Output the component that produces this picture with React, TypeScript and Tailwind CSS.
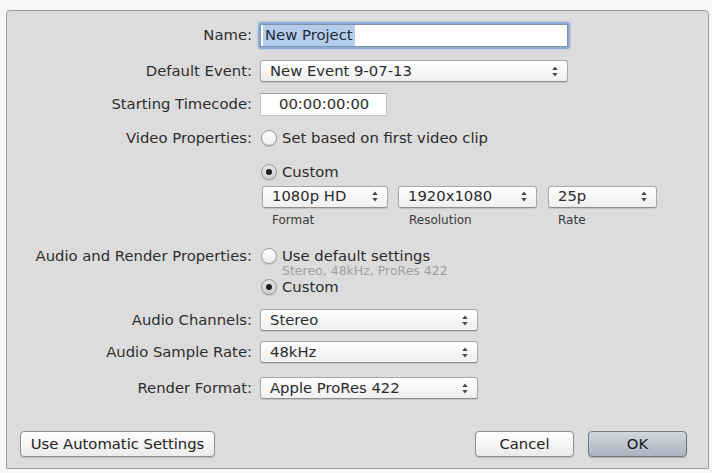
import React from "react";

const font = { fontFamily: '"DejaVu Sans", "Liberation Sans", sans-serif' };

function Arrows() {
  return (
    <svg width="6" height="11" viewBox="0 0 6 11" className="shrink-0">
      <path d="M3 0.5 L5.6 4 L0.4 4 Z" fill="#444" />
      <path d="M3 10.5 L5.6 7 L0.4 7 Z" fill="#444" />
    </svg>
  );
}

function Popup({ text, w, className = "" }: { text: string; w: string; className?: string }) {
  return (
    <div
      className={`${w} ${className} h-[22px] flex items-center justify-between pl-[9px] pr-[9px] rounded-[3px] border border-[#a8a8a8] border-b-[#8e8e8e] bg-gradient-to-b from-[#ffffff] to-[#efefef] shadow-[0_1px_1px_rgba(0,0,0,0.12)] text-[14.8px] text-[#2b2b2b]`}
    >
      <span className="leading-none">{text}</span>
      <Arrows />
    </div>
  );
}

function Radio({ on }: { on?: boolean }) {
  return (
    <div
      className={`w-[16px] h-[16px] rounded-full border border-[#9a9a9a] flex items-center justify-center shrink-0 shadow-[0_1px_1px_rgba(0,0,0,0.12)] ${
        on ? "bg-gradient-to-b from-[#e4e4e4] to-[#cfcfcf]" : "bg-gradient-to-b from-[#ffffff] to-[#ececec]"
      }`}
    >
      {on && <div className="w-[6px] h-[6px] rounded-full bg-[#1e1e1e]" />}
    </div>
  );
}

function Label({ children }: { children: React.ReactNode }) {
  return <div className="w-[245px] shrink-0 text-right text-[14.8px] text-[#2e2e2e] leading-none whitespace-nowrap">{children}</div>;
}

export default function App() {
  return (
    <div className="w-[712px] h-[473px] bg-[#f7f7f7] pt-[10px] pl-[6px] overflow-hidden" style={font}>
      <div className="w-[703px] h-[459px] border border-[#9d9d9d] rounded-t-[4px] bg-[#dcdcdc] flex flex-col">
        {/* Name */}
        <div className="flex items-center h-[27px] mt-[11px]">
          <Label>Name:</Label>
          <div className="ml-[6px] w-[312px] h-[27px] rounded-[3px] border-[2px] border-[#8aacd9] shadow-[0_0_2px_rgba(80,130,200,0.5)]">
            <div className="w-full h-full bg-white border border-[#8292a8] flex items-center pl-[2px]">
              <span className="bg-[#b5cdec] h-full flex items-center px-[2px] text-[14.8px] text-[#1f2a3a] leading-none">New Project</span>
            </div>
          </div>
        </div>
        {/* Default Event */}
        <div className="flex items-center h-[22px] mt-[11px]">
          <Label>Default Event:</Label>
          <Popup text="New Event 9-07-13" w="w-[308px]" className="ml-[8px]" />
        </div>
        {/* Timecode */}
        <div className="flex items-center h-[22px] mt-[11px]">
          <Label>Starting Timecode:</Label>
          <div className="ml-[8px] w-[127px] h-[23px] bg-white border border-[#c4c4c4] border-t-[#9f9f9f] flex items-center pl-[18px] text-[14.8px] text-[#2b2b2b] leading-none">
            00:00:00:00
          </div>
        </div>
        {/* Video Properties */}
        <div className="flex items-center h-[18px] mt-[14px]">
          <Label>Video Properties:</Label>
          <div className="ml-[9px] flex items-center gap-[5px] text-[14.8px] text-[#2b2b2b] leading-none">
            <Radio />
            <span>Set based on first video clip</span>
          </div>
        </div>
        <div className="flex items-center h-[18px] mt-[16px]">
          <div className="w-[245px] shrink-0" />
          <div className="ml-[9px] flex items-center gap-[5px] text-[14.8px] text-[#2b2b2b] leading-none">
            <Radio on />
            <span>Custom</span>
          </div>
        </div>
        <div className="flex items-center h-[23px] mt-[4px]">
          <div className="w-[245px] shrink-0" />
          <Popup text="1080p HD" w="w-[126px]" className="ml-[10px]" />
          <Popup text="1920x1080" w="w-[139px]" className="ml-[10px]" />
          <Popup text="25p" w="w-[109px]" className="ml-[11px]" />
        </div>
        <div className="flex items-center h-[14px] mt-[5px] text-[12px] text-[#3a3a3a] leading-none">
          <div className="w-[245px] shrink-0" />
          <span className="ml-[20px] w-[137px]">Format</span>
          <span className="w-[149px]">Resolution</span>
          <span>Rate</span>
        </div>
        {/* Audio and Render */}
        <div className="flex items-center h-[18px] mt-[20px]">
          <Label>Audio and Render Properties:</Label>
          <div className="ml-[9px] flex items-center gap-[5px] text-[14.8px] text-[#2b2b2b] leading-none">
            <Radio />
            <span>Use default settings</span>
          </div>
        </div>
        <div className="flex items-center h-[12px] text-[12.5px] text-[#a0a0a0] leading-none">
          <div className="w-[245px] shrink-0" />
          <span className="ml-[30px]">Stereo, 48kHz, ProRes 422</span>
        </div>
        <div className="flex items-center h-[18px] mt-[1px]">
          <div className="w-[245px] shrink-0" />
          <div className="ml-[9px] flex items-center gap-[5px] text-[14.8px] text-[#2b2b2b] leading-none">
            <Radio on />
            <span>Custom</span>
          </div>
        </div>
        <div className="flex items-center h-[22px] mt-[13px]">
          <Label>Audio Channels:</Label>
          <Popup text="Stereo" w="w-[218px]" className="ml-[8px]" />
        </div>
        <div className="flex items-center h-[22px] mt-[10px]">
          <Label>Audio Sample Rate:</Label>
          <Popup text="48kHz" w="w-[218px]" className="ml-[8px]" />
        </div>
        <div className="flex items-center h-[22px] mt-[14px]">
          <Label>Render Format:</Label>
          <Popup text="Apple ProRes 422" w="w-[218px]" className="ml-[8px]" />
        </div>
        {/* Buttons */}
        <div className="flex items-center h-[26px] mt-[32px] pl-[13px] pr-[21px]">
          <div className="w-[195px] h-[26px] rounded-[4px] border border-[#8f8f8f] bg-gradient-to-b from-[#ffffff] to-[#ebebeb] shadow-[0_1px_1px_rgba(0,0,0,0.15)] flex items-center justify-center text-[14.8px] text-[#222] leading-none">
            Use Automatic Settings
          </div>
          <div className="flex-1" />
          <div className="w-[99px] h-[26px] rounded-[4px] border border-[#8f8f8f] bg-gradient-to-b from-[#ffffff] to-[#ebebeb] shadow-[0_1px_1px_rgba(0,0,0,0.15)] flex items-center justify-center text-[14.8px] text-[#222] leading-none">
            Cancel
          </div>
          <div className="w-[99px] h-[26px] ml-[14px] rounded-[4px] border border-[#6f7782] bg-gradient-to-b from-[#d2d8e0] to-[#a9b2be] shadow-[0_1px_1px_rgba(0,0,0,0.2)] flex items-center justify-center text-[14.8px] text-[#1a1a1a] leading-none">
            OK
          </div>
        </div>
      </div>
    </div>
  );
}
